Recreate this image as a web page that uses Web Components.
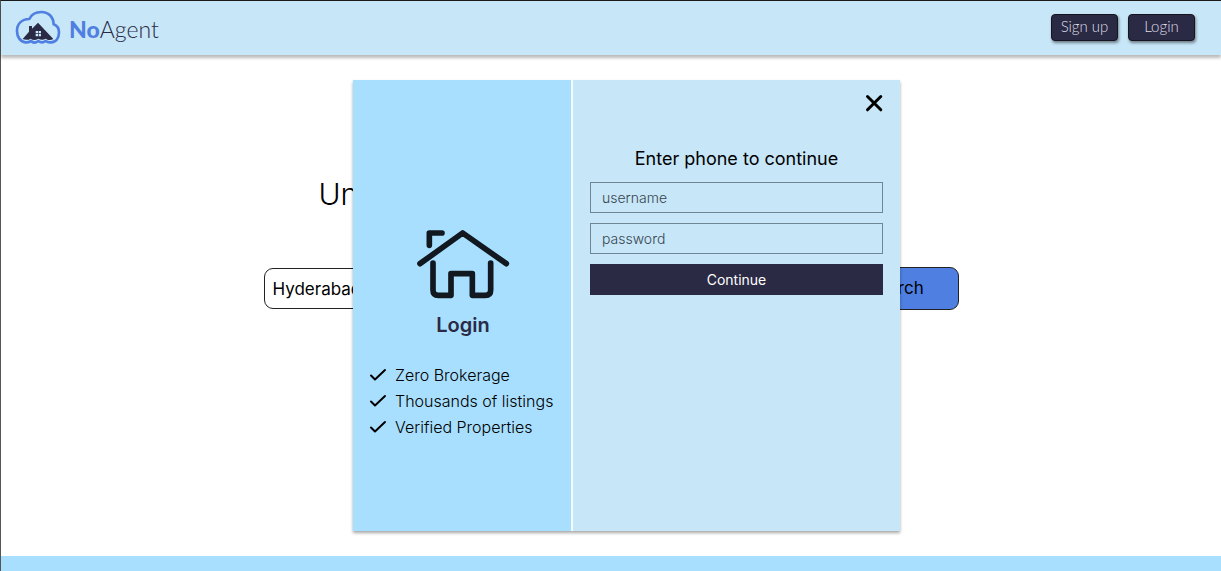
<!DOCTYPE html>
<html lang="en">
<head>
<meta charset="utf-8">
<meta name="viewport" content="width=device-width, initial-scale=1">
<title>NoAgent</title>
<style>
  html, body { height: 100%; margin: 0; }
  body { font-family: Inter, sans-serif; color: #000; background: #fff; }
</style>
</head>
<body>
<no-agent-app></no-agent-app>
<script>
class Base extends HTMLElement {
  constructor() {
    super();
    const t = document.createElement('template');
    t.innerHTML = this.constructor.markup;
    this.attachShadow({ mode: 'open' }).append(t.content.cloneNode(true));
  }
}

class SiteLogo extends Base {
  static markup = `
    <style>
      :host { display: block; }
      a { display: flex; align-items: center; gap: 8px; color: #2b2a45; text-decoration: none;
          font: 300 23px/28px Lato, sans-serif; }
      b { font-weight: 900; color: #4f7fe0; }
      svg { display: block; }
      span { padding-top: 4px; }
    </style>
    <a href="#">
      <svg width="46" height="35" viewBox="45 30 138 105" aria-hidden="true">
        <path d="M76 127C62 126 51 112 51 93C51 72 65 58 88 57C94 44 107 36 124 36C145 36 160 50 161 73C171 77 177 86 177 97C177 114 168 126 153 127C146 128 141 126 137 123C130 128 122 128 115 123C107 129 99 129 93 123C88 126 82 128 76 127Z" fill="none" stroke="#4f7fe0" stroke-width="8" stroke-linejoin="round"/>
        <path d="M68 117L87 95V78H96V86L114 68L160 117C153 121 143 121 137 116C130 121 121 120 115 116C107 121 98 121 92 116C84 121 75 120 68 117Z" fill="#2b2a45"/>
        <path d="M107 93h7v7h-7zM116 93h7v7h-7zM107 102h7v7h-7zM116 102h7v7h-7z" fill="#c7e6f8"/>
      </svg>
      <span><b>No</b>Agent</span>
    </a>`;
}
customElements.define('site-logo', SiteLogo);

class NavButton extends Base {
  static markup = `
    <style>
      :host { display: block; }
      button { display: block; width: 67px; height: 27px; padding: 0 0 2px; border: 1px solid #15151f; border-radius: 4px;
        background: #2b2a45; color: #dedee6; font: 300 15px/22px Lato, sans-serif;
        box-shadow: 1px 2px 3px rgba(0,0,0,.45); white-space: nowrap; }
    </style>
    <button type="button"><slot></slot></button>`;
}
customElements.define('nav-button', NavButton);

class SiteHeader extends Base {
  static markup = `
    <style>
      :host { display: flex; justify-content: space-between; align-items: center; height: 54px;
        padding: 0 26px 2px 14px; box-sizing: border-box; background: #c7e6f8;
        box-shadow: 0 3px 3px rgba(0,0,0,.27); }
      nav { display: flex; gap: 10px; }
    </style>
    <site-logo></site-logo>
    <nav><nav-button>Sign up</nav-button><nav-button>Login</nav-button></nav>`;
}
customElements.define('site-header', SiteHeader);

class HeroSearch extends Base {
  static markup = `
    <style>
      :host { display: block; width: 695px; max-width: 100%; margin: 0 auto; padding-top: 120px; }
      h1 { margin: 0 0 54px 55px; font: 300 30px/38px Inter, sans-serif; }
      form { display: flex; align-items: center; }
      select { flex: 1; height: 41px; margin: 0 16px 0 0; padding: 0 8px; border: 1px solid #222; border-radius: 9px;
        appearance: none; background: #fff; color: #000; font: 400 17px/24px Inter, sans-serif; }
      button { width: 126px; height: 43px; padding: 0 0 2px; border: 1px solid #222; border-radius: 9px;
        background: #4f7fe0; color: #000; font: 400 17px/24px Inter, sans-serif; }
    </style>
    <h1>Un</h1>
    <form>
      <select aria-label="City"><option>Hyderabad</option></select>
      <button type="button">Search</button>
    </form>`;
}
customElements.define('hero-search', HeroSearch);

class CheckItem extends Base {
  static markup = `
    <style>
      :host { display: flex; align-items: center; gap: 8px; font: 300 16px/26px Inter, sans-serif; white-space: nowrap; }
    </style>
    <svg width="18" height="14" viewBox="0 0 18 14" aria-hidden="true"><path d="M2 7.5L6 11.5L16 2" fill="none" stroke="#000" stroke-width="2" stroke-linecap="round" stroke-linejoin="round"/></svg>
    <span><slot></slot></span>`;
}
customElements.define('check-item', CheckItem);

class LoginIntro extends Base {
  static markup = `
    <style>
      :host { display: flex; flex-direction: column; align-items: center; box-sizing: border-box;
        padding: 147px 14px 0 16px; background: #a8dfff; }
      svg { display: block; }
      h2 { margin: 12px 0 24px; color: #2b2a45; font: 600 20px/26px Inter, sans-serif; }
      div { align-self: stretch; }
    </style>
    <svg width="93" height="73" viewBox="50 50 279 219" fill="none" stroke="#111820" stroke-width="17" stroke-linecap="round" stroke-linejoin="round" aria-hidden="true">
      <path d="M87 105V68H125M59 160L187 68L318 160M98 158V239Q98 255 114 255H152V190H216V255H255Q271 255 271 239V158"/>
    </svg>
    <h2>Login</h2>
    <div>
      <check-item>Zero Brokerage</check-item>
      <check-item>Thousands of listings</check-item>
      <check-item>Verified Properties</check-item>
    </div>`;
}
customElements.define('login-intro', LoginIntro);

class LoginForm extends Base {
  static markup = `
    <style>
      :host { display: flex; flex-direction: column; box-sizing: border-box; padding: 12px 17px 0; background: #c7e6f8; }
      .close { align-self: flex-end; width: 22px; height: 22px; margin-right: -2px; padding: 0; border: 0; background: none; }
      svg { display: block; }
      form { display: grid; gap: 10px; margin-top: 32px; }
      h2 { margin: 0; text-align: center; font: 400 18px/26px Inter, sans-serif; }
      input { box-sizing: border-box; width: 100%; height: 31px; padding: 0 11px; border: 1px solid #6f8794;
        border-radius: 0; background: none; font: 300 14px/20px Inter, sans-serif; }
      input::placeholder { color: #36454e; opacity: 1; }
      .go { height: 31px; padding: 0; border: 0; background: #2b2a45; color: #fff; font: 400 14px/20px Inter, sans-serif; }
    </style>
    <button class="close" type="button" aria-label="Close">
      <svg width="22" height="22" viewBox="0 0 22 22" aria-hidden="true"><path d="M4.5 4.5L17.8 17.8M17.8 4.5L4.5 17.8" stroke="#000" stroke-width="3" stroke-linecap="round"/></svg>
    </button>
    <form>
      <h2>Enter phone to continue</h2>
      <input type="text" placeholder="username" aria-label="username">
      <input type="password" placeholder="password" aria-label="password">
      <button class="go" type="button">Continue</button>
    </form>`;
}
customElements.define('login-form', LoginForm);

class LoginDialog extends Base {
  static markup = `
    <style>
      :host { display: grid; grid-template-columns: 2fr 3fr; gap: 2px; width: 547px; max-width: 100%; min-height: 451px;
        background: #f4fbff; box-shadow: 0 2px 3px rgba(0,0,0,.35); }
    </style>
    <login-intro></login-intro>
    <login-form></login-form>`;
}
customElements.define('login-dialog', LoginDialog);

class NoAgentApp extends Base {
  static markup = `
    <style>
      :host { display: flex; flex-direction: column; box-sizing: border-box; position: relative; min-height: 100%;
        border-top: 1px solid #1a1a1a; border-left: 1px solid #555; }
      main { flex: 1; }
      footer { height: 15px; background: #a8dfff; }
      .overlay { position: absolute; inset: 79px 0 auto 31px; display: flex; justify-content: center; }
    </style>
    <site-header></site-header>
    <main><hero-search></hero-search></main>
    <footer></footer>
    <div class="overlay"><login-dialog role="dialog" aria-label="Login"></login-dialog></div>`;
}
customElements.define('no-agent-app', NoAgentApp);
</script>
</body>
</html>
